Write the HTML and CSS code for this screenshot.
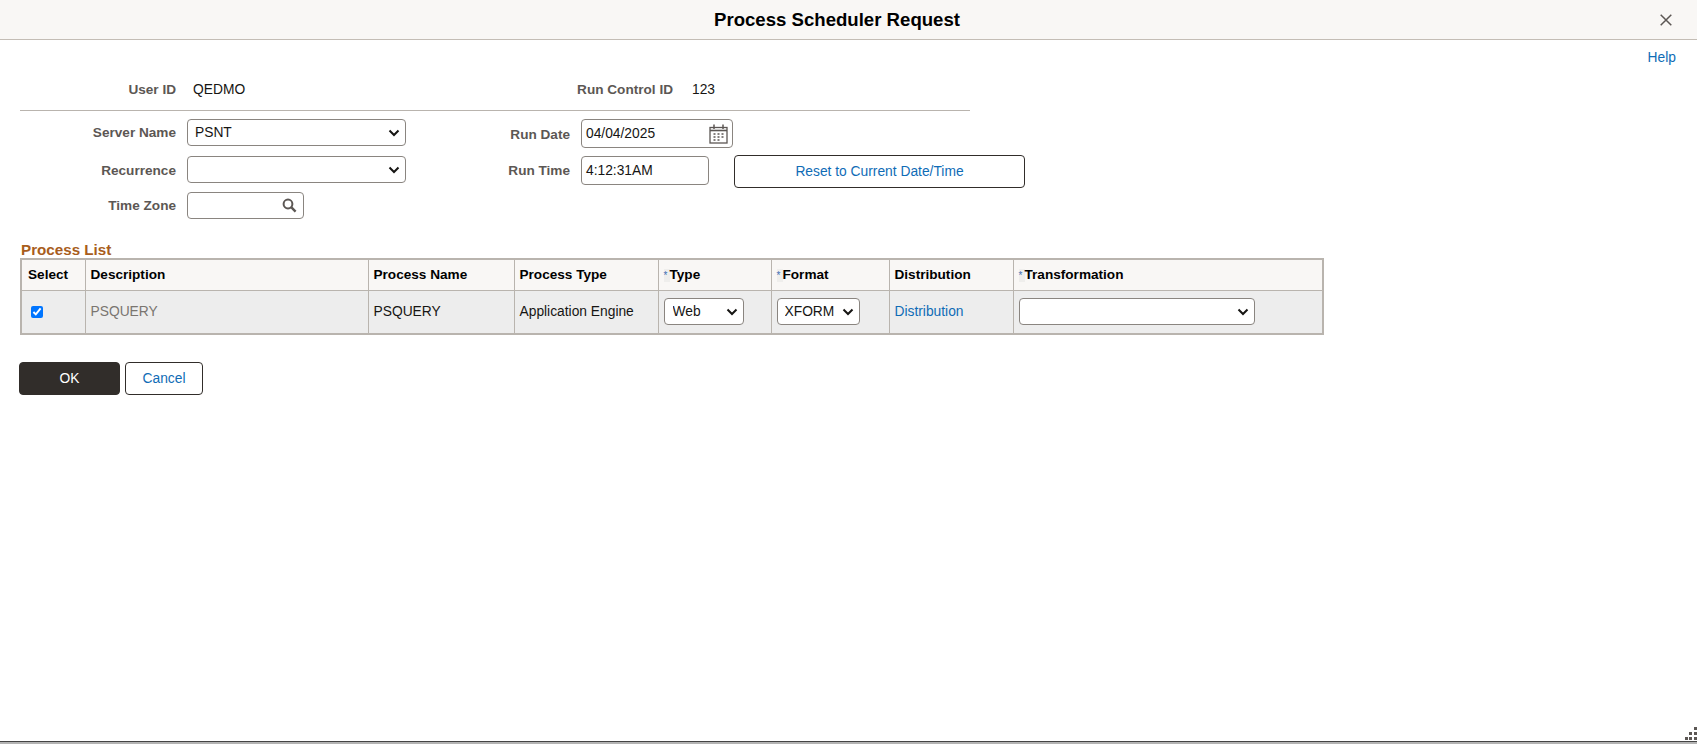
FILE: index.html
```html
<!DOCTYPE html>
<html lang="en">
<head>
<meta charset="utf-8">
<title>Process Scheduler Request</title>
<link rel="stylesheet" href="styles.css">
</head>
<body>
<header class="titlebar">
  <h1 class="title">Process Scheduler Request</h1>
  <button class="close" aria-label="Close">
    <svg width="12" height="12" viewBox="0 0 12 12"><path d="M.7.7l10.6 10.6M11.3.7L.7 11.3" stroke="#5c5754" stroke-width="1.5" fill="none"/></svg>
  </button>
</header>
<main class="page">
  <div class="help-row"><a class="link" href="#">Help</a></div>
  <section class="info">
    <span class="label label-left">User ID</span>
    <span class="value value-user">QEDMO</span>
    <span class="label label-run">Run Control ID</span>
    <span class="value value-run">123</span>
  </section>
  <section class="fields">
    <div class="field-col field-col-left">
      <label class="label label-left">Server Name</label>
      <select class="select select-wide"><option>PSNT</option></select>
      <label class="label label-left label-down">Recurrence</label>
      <select class="select select-wide"><option></option></select>
      <label class="label label-left">Time Zone</label>
      <div class="input input-zone">
        <svg width="15" height="15" viewBox="0 0 15 15"><circle cx="6" cy="6" r="4.4" fill="none" stroke="#5c5754" stroke-width="2"/><path d="M9.4 9.4l4.2 4.2" stroke="#5c5754" stroke-width="2.4" fill="none"/></svg>
      </div>
    </div>
    <div class="field-col field-col-right">
      <label class="label label-down">Run Date</label>
      <div class="input input-date">
        <span>04/04/2025</span>
        <svg width="19" height="20" viewBox="0 0 19 20" fill="none" stroke="#5c5754"><rect x="1" y="3.5" width="17" height="15.5" stroke-width="1.3"/><path d="M1 6.5h17" stroke-width="1.6"/><path d="M5 .5v4.5M14 .5v4.5" stroke-width="1.5"/><path d="M4.5 10h2M8.5 10h2M12.5 10h2M4.5 13h2M8.5 13h2M12.5 13h2M4.5 16h2M8.5 16h2" stroke-width="1.5"/></svg>
      </div>
      <label class="label">Run Time</label>
      <div class="time-row">
        <div class="input input-time"><span>4:12:31AM</span></div>
        <button class="btn btn-reset">Reset to Current Date/Time</button>
      </div>
    </div>
  </section>
  <h2 class="section-title">Process List</h2>
  <table class="grid">
    <colgroup>
      <col class="c1"><col class="c2"><col class="c3"><col class="c4"><col class="c5"><col class="c6"><col class="c7"><col class="c8">
    </colgroup>
    <thead>
      <tr>
        <th class="th-first">Select</th>
        <th>Description</th>
        <th>Process Name</th>
        <th>Process Type</th>
        <th class="req"><span class="star">*</span>Type</th>
        <th class="req"><span class="star">*</span>Format</th>
        <th>Distribution</th>
        <th class="req"><span class="star">*</span>Transformation</th>
      </tr>
    </thead>
    <tbody>
      <tr>
        <td class="cell-check"><input type="checkbox" checked></td>
        <td class="muted">PSQUERY</td>
        <td>PSQUERY</td>
        <td>Application Engine</td>
        <td class="cell-ctl"><select class="select select-type"><option>Web</option></select></td>
        <td class="cell-ctl"><select class="select select-format"><option>XFORM</option></select></td>
        <td><a class="link" href="#">Distribution</a></td>
        <td class="cell-ctl"><select class="select select-trans"><option></option></select></td>
      </tr>
    </tbody>
  </table>
  <div class="actions">
    <button class="btn btn-ok">OK</button>
    <button class="btn btn-cancel">Cancel</button>
  </div>
</main>
<footer class="bottom">
  <svg class="grip" width="12" height="13" viewBox="0 0 12 13" fill="#5c5754"><rect x="9" y="0" width="3" height="3"/><rect x="9" y="5" width="3" height="3"/><rect x="4" y="5" width="3" height="3"/><rect x="9" y="10" width="3" height="3"/><rect x="4" y="10" width="3" height="3"/><rect x="0" y="10" width="3" height="3"/></svg>
</footer>
</body>
</html>
```
FILE: styles.css
```css
* { box-sizing: border-box; }
html, body { height: 100%; }
body {
  margin: 0;
  height: 100vh;
  overflow: hidden;
  display: flex;
  flex-direction: column;
  background: #fff;
  color: #161513;
  font: 13.8px "Liberation Sans", Arial, sans-serif;
}
.titlebar {
  flex: none;
  height: 40px;
  display: flex;
  align-items: center;
  justify-content: center;
  position: relative;
  padding-right: 23px;
  background: #f9f7f5;
  border-bottom: 1px solid #c4bdb5;
}
.title { margin: 0; font-size: 18.6px; font-weight: 700; color: #000; }
.close {
  position: absolute;
  right: 25px;
  top: 14px;
  padding: 0;
  border: 0;
  background: none;
  line-height: 0;
}
.page { flex: 1; min-height: 0; }
.link { color: #0f6cb6; text-decoration: none; }
.help-row { height: 29px; padding: 10px 21px 0 0; text-align: right; line-height: 16px; }
.label { font-size: 13.6px; font-weight: 700; color: #5c5754; text-align: right; }
.value { color: #161513; }
.info {
  margin-left: 20px;
  width: 950px;
  height: 42px;
  display: flex;
  align-items: center;
  padding-bottom: 1px;
  border-bottom: 1px solid #b9b4ae;
}
.label-left { width: 156px; }
.value-user { margin-left: 17px; width: 296px; }
.label-run { width: 184px; }
.value-run { margin-left: 19px; }
.fields { margin: 8px 0 0 20px; display: flex; height: 110px; }
.field-col { display: grid; align-content: start; align-items: start; }
.field-col .label { line-height: 28px; }
.field-col-left { width: 386px; grid-template-columns: 156px auto; column-gap: 11px; grid-template-rows: 37px 36px 27px; justify-content: start; }
.field-col-right { grid-template-columns: 164px auto; column-gap: 11px; grid-template-rows: 37px 29px; justify-content: start; }
.field-col-right .label { line-height: 30px; }
.field-col .label-down { padding-top: 1px; }
.select {
  height: 27px;
  padding: 0 24px 0 7px;
  border: 1px solid #8a8580;
  border-radius: 4px;
  appearance: none;
  background: #fff url("data:image/svg+xml,%3Csvg xmlns='http://www.w3.org/2000/svg' width='12' height='8' viewBox='0 0 12 8'%3E%3Cpath d='M1.5 1.5L6 6l4.5-4.5' fill='none' stroke='%23161513' stroke-width='2'/%3E%3C/svg%3E") no-repeat right 5px center;
  color: #161513;
  font: 13.8px "Liberation Sans", Arial, sans-serif;
}
.select-wide { width: 219px; }
.input {
  height: 29px;
  display: flex;
  align-items: center;
  border: 1px solid #8a8580;
  border-radius: 4px;
  background: #fff;
  padding: 0 4px;
}
.input-zone { width: 117px; height: 27px; justify-content: flex-end; padding-right: 6px; }
.input-date { width: 152px; justify-content: space-between; padding-right: 4px; }
.input-time { width: 128px; }
.time-row { display: flex; align-items: flex-start; gap: 25px; height: 29px; }
.btn {
  border: 1px solid #312d2a;
  border-radius: 4px;
  font: 13.8px "Liberation Sans", Arial, sans-serif;
  background: #fff;
  color: #0f6cb6;
  padding: 0;
}
.btn-reset { width: 291px; height: 33px; margin-top: -1px; }
.section-title { margin: 13px 0 0 21px; font-size: 15.2px; line-height: 16px; font-weight: 700; color: #a85d1c; }
.grid {
  margin: 0 0 0 20px;
  width: 1302px;
  table-layout: fixed;
  border-collapse: collapse;
  border: 2px solid #b9b4ae;
}
.c1 { width: 64px; } .c2 { width: 283px; } .c3 { width: 146px; } .c4 { width: 144px; }
.c5 { width: 113px; } .c6 { width: 118px; } .c7 { width: 124px; } .c8 { width: 310px; }
.grid th, .grid td { border: 1px solid #b9b4ae; padding: 0 4px; text-align: left; }
.grid th { height: 31px; background: #f9f7f5; color: #000; font-size: 13.6px; font-weight: 700; padding-left: 5px; }
.grid .th-first { padding-left: 6px; }
.grid td { height: 44px; background: #ededed; padding-left: 5px; }
.star { display: inline-block; width: 6px; line-height: 13px; font-size: 10px; font-weight: 400; color: #3f6fb5; background: #efeeec; }
.grid .cell-check { padding-left: 9px; }
.cell-check input { display: block; margin: 0; width: 12px; height: 12px; }
.muted { color: #7a7570; }
.select-type { width: 80px; display: block; padding-left: 8px; }
.select-format { width: 83px; display: block; }
.select-trans { width: 236px; display: block; }
.actions { margin: 27px 0 0 19px; display: flex; gap: 5px; }
.btn-ok { width: 101px; height: 33px; background: #312d2a; color: #fff; }
.btn-cancel { width: 78px; height: 33px; }
.bottom {
  flex: none;
  height: 3px;
  position: relative;
  background: #b3b3b3;
  border-top: 1px solid #444;
}
.grip { position: absolute; right: 0; bottom: 4px; }
```
